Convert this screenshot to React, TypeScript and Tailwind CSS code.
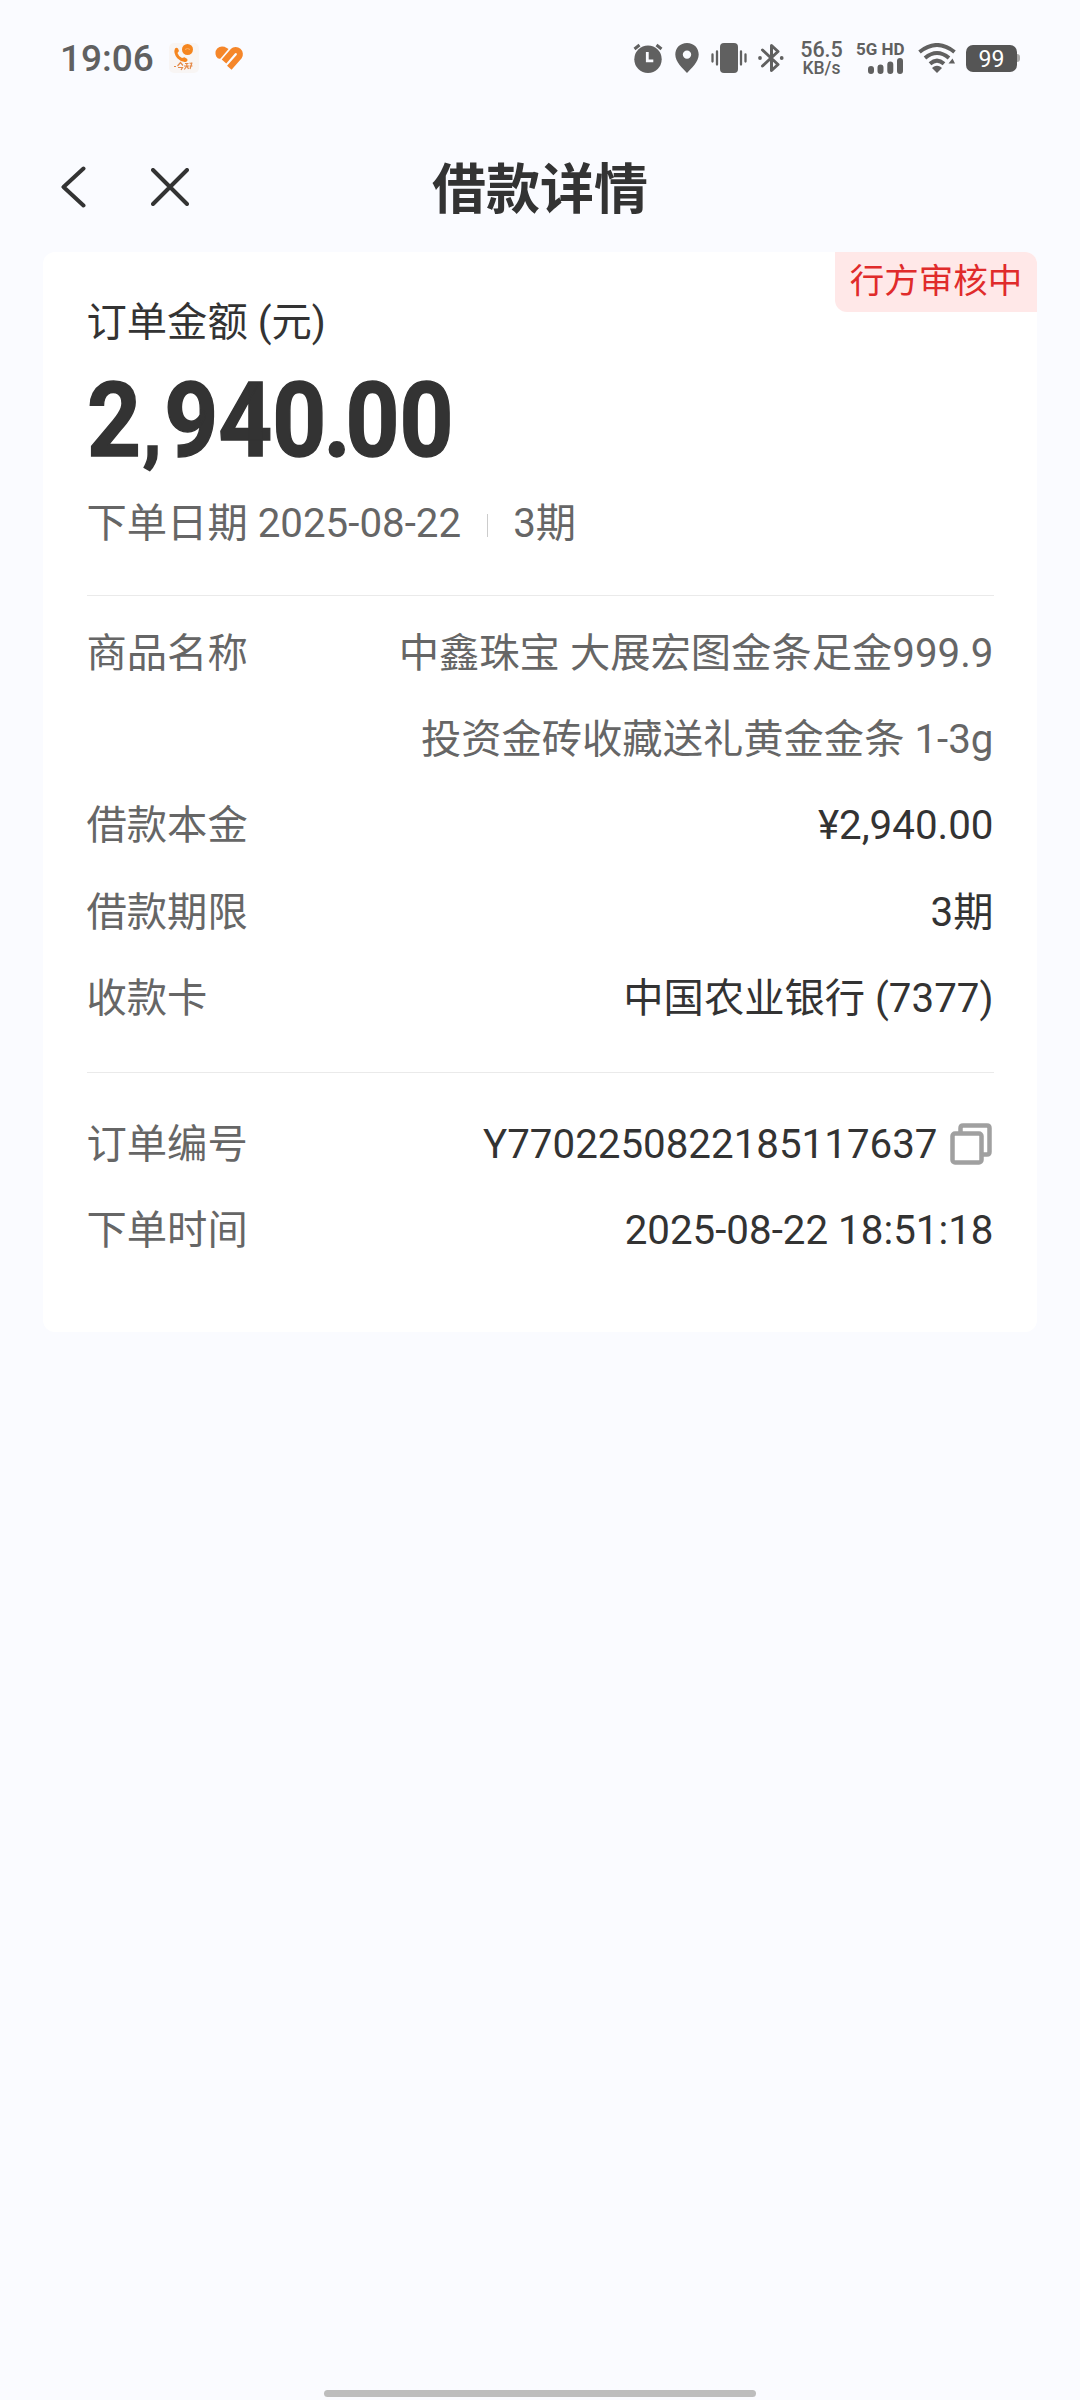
import { ReactNode } from "react"

type RowProps = {
  label: string
  children: ReactNode
  muted?: boolean
}

const Row = ({ label, children, muted }: RowProps) => {
  return (
    <div className="flex justify-between leading-[86.200px]">
      <div className="text-[#666]">{label}</div>
      <div className={muted ? "text-right text-[#666]" : "flex items-center text-right text-[#333]"}>
        {children}
      </div>
    </div>
  )
}

const AppIcons = () => (
  <div className="ml-[15px] flex items-center gap-[16px]">
    <svg width="30" height="30" viewBox="0 0 30 30">
      <rect width="30" height="30" rx="5" fill="#f8f5f4" />
      <circle cx="18.5" cy="6.500" r="5.500" fill="#f5861f" />
      <path d="M16 6.500q2.500-2 5 0" stroke="#fbb26c" strokeWidth="1" fill="none" />
      <path d="M6 5.500q1.500-1.500 3 0l1 2.500-1.500 2q1 3.500 4.500 5l2.500-.8 2.800 1.800q.8 2-1 2.700-4.500 1-9-3.500Q4 10 6 5.500z" fill="#f5861f" />
      <path d="M5 23.500h2M8.500 23l3-3.500 2.500 3M9 24.500h4.500l-1.500 2.500M16 20.500h3.500M15 23h5M17.800 20v3l-2.500 3.500M18 23l1.500 3M20.500 20l2 .5M23 19.500l-2 6.500M20.500 23h3" stroke="#e58a48" strokeWidth="1.200" fill="none" />
    </svg>
    <svg width="29" height="24" viewBox="0 0 29 24">
      <path d="M9 15.500 17.800 5.200a4.200 4.200 0 0 1 6.300 5.500L14.300 21.800" fill="none" stroke="#f5862a" strokeWidth="6" />
      <path d="M1.300 10.500Q-.8 6 2.200 2.500 5.200-.5 9.500.8L13.500 3 5.500 12.500Q3 13.500 1.300 10.500z" fill="#f5862a" />
    </svg>
  </div>
)

const StatusBar = () => {
  return (
    <div className="flex h-[116px] items-center pl-[60px] text-[#606060]">
      <div className="w-[94px] text-[37px] leading-none font-medium">19:06</div>
      <AppIcons />
      <div className="ml-auto flex items-center pr-[60px]">
        <svg width="30" height="30" viewBox="0 0 30 30">
          <circle cx="15" cy="16.300" r="13.700" fill="currentColor" />
          <path d="M1.500 6 6.500 2M28.500 6l-5-4" stroke="currentColor" strokeWidth="3" />
          <path d="M14.300 9v8.800h6" stroke="#fafbff" strokeWidth="2.800" fill="none" />
        </svg>
        <svg className="ml-[12px]" width="24" height="30" viewBox="0 0 24 30">
          <path fillRule="evenodd" d="M12 0C5 0 .3 5 .3 11.500.3 19 8 25.500 12 30c4-4.500 11.700-11 11.700-18.500C23.700 5 19 0 12 0zm0 7.400a4.200 4.200 0 1 1 0 8.400 4.200 4.200 0 0 1 0-8.400z" fill="currentColor" />
        </svg>
        <svg className="ml-[12px]" width="36" height="30" viewBox="0 0 36 30">
          <rect x="9" width="18" height="30" rx="4" fill="currentColor" />
          <path d="M6 8.500v13M30 8.500v13M1.500 11.500v7M34.500 11.500v7" stroke="currentColor" strokeWidth="2.300" strokeLinecap="round" />
        </svg>
        <svg className="ml-[11px]" width="26" height="30" viewBox="0 0 26 30">
          <path d="m4.500 7 15.500 14.500-6.500 6V2.500l6.500 6L4.500 23" fill="none" stroke="currentColor" strokeWidth="3" strokeLinecap="round" strokeLinejoin="round" />
          <circle cx="2" cy="15" r="1.900" fill="currentColor" />
          <circle cx="23.700" cy="15" r="1.900" fill="currentColor" />
        </svg>
        <div className="ml-[16px] w-[43px] text-center font-medium">
          <div className="text-[21.500px] leading-[19px]">56.5</div>
          <div className="text-[17.500px] leading-[18px]">KB/s</div>
        </div>
        <div className="ml-[13px] flex w-[52px] flex-col">
          <div className="text-[17px] leading-[16px] font-bold whitespace-nowrap">5G HD</div>
          <svg className="mt-[1px] ml-[12px]" width="36" height="17" viewBox="0 0 36 17">
            <path d="M3 11v2M12.500 9.500V13M22.300 6.500V13M32 3v10" stroke="currentColor" strokeWidth="6" strokeLinecap="round" />
          </svg>
        </div>
        <svg className="ml-[10px]" width="38" height="30" viewBox="0 0 38 30">
          <g fill="none" stroke="currentColor" strokeWidth="4">
            <path d="M1.500 9Q19-5 36.500 9" />
            <path d="M7 15Q19 5 31 15" />
            <path d="M12 20.700Q19 14.500 26 20.700" />
          </g>
          <path d="m14 25 2-1.500q3-1.500 6 0l2 1.500-5 5z" fill="currentColor" />
          <path d="m30.500 20.500 4-5 2.500 5z" fill="currentColor" />
        </svg>
        <div className="ml-[10px] flex items-center">
          <div className="h-[27px] w-[51px] rounded-[7px] bg-[#555] pt-px text-center text-[23px] leading-[27px] text-white">99</div>
          <div className="h-[8px] w-[3px] rounded-r-sm bg-[#aaa]" />
        </div>
      </div>
    </div>
  )
}

const Header = () => {
  return (
    <div className="grid h-[136px] grid-cols-3 items-center px-[61px] pt-[6px] text-[#333]">
      <div className="flex items-center gap-[65px]">
        <svg width="25" height="42" viewBox="0 0 25 42" fill="none" stroke="#333" strokeWidth="4" strokeLinecap="round" strokeLinejoin="round">
          <path d="M22.500 2.500 2.500 21l20 18.500" />
        </svg>
        <svg width="38" height="38" viewBox="0 0 38 38" fill="none" stroke="#333" strokeWidth="4" strokeLinecap="round">
          <path d="m2 2 34 34M36 2 2 36" />
        </svg>
      </div>
      <div className="mt-[6px] text-center text-[54px] font-bold">借款详情</div>
    </div>
  )
}

const App = () => {
  return (
    <div className="flex h-[2400px] w-[1080px] flex-col bg-[#fafbff] font-[Roboto,'Noto_Sans_CJK_SC',sans-serif]">
      <StatusBar />
      <Header />
      <div className="relative mx-[43px] h-[1080px] rounded-[12px] bg-white px-[43.500px] pt-[39px] text-[40.300px]">
        <div className="absolute top-0 right-0 h-[60px] w-[202px] rounded-tr-[12px] rounded-bl-[12px] bg-[#ffe8e8] text-center text-[34.500px] leading-[58px] text-[#e02b2b]">
          行方审核中
        </div>
        <div className="leading-[64px] text-[#333]">订单金额 (元)</div>
        <div className="h-[126px] w-[420px] origin-left scale-x-[0.905] text-[104px] leading-[131px] font-bold whitespace-nowrap text-[#333] [-webkit-text-stroke:1.5px_#333]">
          2<span className="ml-[2px] mr-[3px] text-[84px] leading-none">,</span>940<span className="-ml-[3px] tracking-[-6px]">.</span>00
        </div>
        <div className="flex h-[86px] items-center text-[#666]">
          <span>下单日期 2025-08-22</span>
          <span className="mt-[3px] mr-[25px] ml-[26px] h-[23px] w-px bg-[#ccc]" />
          <span>3期</span>
        </div>
        <div className="mt-[28px] border-t border-[#eaeaea] pt-[15px]">
          <Row label="商品名称" muted>
            中鑫珠宝 大展宏图金条足金999.9<br />投资金砖收藏送礼黄金金条 1-3g
          </Row>
          <Row label="借款本金">¥2,940.00</Row>
          <Row label="借款期限">3期</Row>
          <Row label="收款卡">中国农业银行 (7377)</Row>
        </div>
        <div className="mt-[29.500px] border-t border-[#eaeaea] pt-[29px]">
          <Row label="订单编号">
            Y7702250822185117637
            <svg className="mr-[2px] mb-[2px] ml-[12px]" width="42" height="42" viewBox="0 0 42 42" fill="none" stroke="#a0a0a0" strokeWidth="4.500">
              <rect x="2.500" y="10.500" width="29" height="29" rx="2.500" />
              <path d="M10.500 10V5q0-2.500 2.500-2.500h24q2.500 0 2.500 2.500v24q0 2.500-2.500 2.500h-5" />
            </svg>
          </Row>
          <Row label="下单时间">2025-08-22 18:51:18</Row>
        </div>
      </div>
      <div className="mx-auto mt-auto mb-[3px] h-[7px] w-[432px] rounded-full bg-[#bdbdbd]" />
    </div>
  )
}

export default App
